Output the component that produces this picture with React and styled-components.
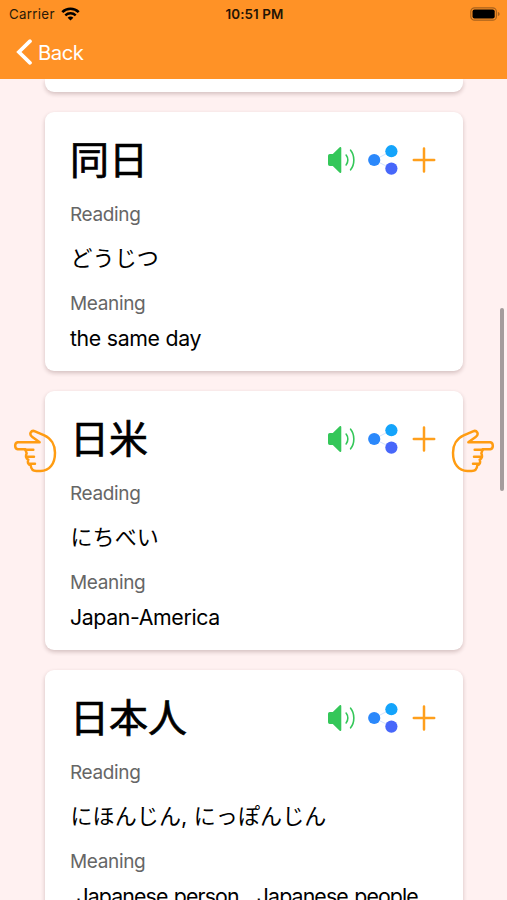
import React from 'react';
import styled, { createGlobalStyle } from 'styled-components';

const GlobalStyle = createGlobalStyle`
  * {
    box-sizing: border-box;
  }

  body {
    margin: 0;
    background-color: #fff1f1;
    font-family: Inter, "Noto Sans CJK JP", sans-serif;
    color: #000;
  }
`;

const Screen = styled.div`
  position: relative;
  display: flex;
  flex-direction: column;
  width: 507px;
  height: 900px;
  overflow: hidden;
  background-color: #fff1f1;
`;

const Header = styled.header`
  flex: none;
  height: 79px;
  background-color: #ff9226;
`;

const StatusBar = styled.div`
  display: grid;
  grid-template-columns: 1fr auto 1fr;
  align-items: center;
  height: 27px;
  padding: 0 7px 0 9px;
`;

const Carrier = styled.div`
  display: flex;
  align-items: center;
  gap: 6px;
  font-size: 13.3px;
  letter-spacing: 0.3px;
  color: #2b1a08;
`;

const Time = styled.div`
  font-size: 13.4px;
  font-weight: 600;
  letter-spacing: 0.1px;
  color: #241405;
`;

const Battery = styled.div`
  display: flex;
  justify-content: flex-end;
`;

const BackButton = styled.button`
  display: flex;
  align-items: center;
  gap: 5px;
  height: 50px;
  padding: 0 0 0 16px;
  border: none;
  background: none;
  font-family: inherit;
  font-size: 20.3px;
  letter-spacing: -0.5px;
  color: #fff;
  cursor: pointer;
`;

const CardList = styled.main`
  flex: 1;
  display: flex;
  flex-direction: column;
  gap: 20px;
  padding: 0 44px 0 45px;
  overflow: hidden;
`;

const Card = styled.section`
  flex: none;
  height: 259px;
  padding: 20px 27px 0 25px;
  border-radius: 9px;
  background-color: #fff;
  box-shadow: 0 2px 4px rgba(60, 20, 20, 0.22);
`;

const PreviousCard = styled(Card)`
  height: 13px;
  padding: 0;
  border-radius: 0 0 9px 9px;
`;

const CardHeader = styled.div`
  display: flex;
  justify-content: space-between;
  align-items: center;
  height: 56px;
`;

const Word = styled.h2`
  margin: 0;
  padding-bottom: 7px;
  font-family: "Noto Sans CJK JP", sans-serif;
  font-size: 39px;
  font-weight: 400;
  line-height: 56px;
  -webkit-text-stroke: 0.7px #000;
`;

const Actions = styled.div`
  display: flex;
  align-items: center;
`;

const ActionButton = styled.button`
  display: flex;
  padding: 0;
  margin-left: ${props => props.$gap || '0'};
  border: none;
  background: none;
  cursor: pointer;
`;

const Label = styled.div`
  height: ${props => props.$height};
  padding-top: ${props => props.$top};
  font-size: 19px;
  line-height: 26px;
  letter-spacing: -0.35px;
  color: #666;
`;

const Reading = styled.div`
  height: 44px;
  padding-left: 0.5px;
  font-size: 22px;
  line-height: 44px;
  letter-spacing: 0.1px;
  white-space: pre;
`;

const Meaning = styled.div`
  font-size: 21.3px;
  line-height: 30px;
  letter-spacing: ${props => (props.$tight ? '-0.87px' : '-0.37px')};
  word-spacing: ${props => (props.$tight ? '1.3px' : '0.3px')};
  white-space: pre;
`;

const Hand = styled.button`
  position: absolute;
  top: 429px;
  left: ${props => props.$left};
  width: 44px;
  height: 44px;
  padding: 0;
  border: none;
  background: none;
  cursor: pointer;
  transform: ${props => (props.$flip ? 'scaleX(-1)' : 'none')};

  svg {
    display: block;
  }
`;

const ScrollThumb = styled.div`
  position: absolute;
  top: 308px;
  right: 3px;
  width: 4px;
  height: 183px;
  border-radius: 2px;
  background-color: #a59c9c;
`;

const words = [
  { id: 1, word: '同日', reading: 'どうじつ', meaning: 'the same day' },
  { id: 2, word: '日米', reading: 'にちべい', meaning: 'Japan-America' },
  { id: 3, word: '日本人', reading: 'にほんじん, にっぽんじん', meaning: ' Japanese person,  Japanese people' },
];

const WifiIcon = () => (
  <svg width="19" height="14" viewBox="0 0 19 14" fill="none" stroke="#000">
    <path d="M1.3 5.1C5.8 .6 13.2 .6 17.7 5.1" strokeWidth="2.6" />
    <path d="M4.3 8.3C7.2 5.5 11.8 5.5 14.7 8.3" strokeWidth="2.4" />
    <path d="M9.5 13.6L6.6 10.7C8.2 9.2 10.8 9.2 12.4 10.7Z" fill="#000" stroke="none" />
  </svg>
);

const BatteryIcon = () => (
  <svg width="30" height="14" viewBox="0 0 30 14">
    <rect x=".8" y=".8" width="25.6" height="12.4" rx="3.8" fill="none" stroke="#a8621d" strokeWidth="1.2" />
    <rect x="2.5" y="2.5" width="22.2" height="9" rx="2" fill="#000" />
    <path d="M27.9 4.9C30.2 5.6 30.2 8.4 27.9 9.1Z" fill="#a8621d" />
  </svg>
);

const BackIcon = () => (
  <svg width="17" height="26" viewBox="0 0 17 26" fill="none" stroke="#fff" strokeWidth="3.7" strokeLinecap="round">
    <path d="M14 2.2L2.9 13L14 23.8" strokeLinejoin="miter" />
  </svg>
);

const SpeakerIcon = () => (
  <svg width="27" height="28" viewBox="0 0 27 28">
    <path
      d="M1.8 7.9H4.8L11.7 1.3C12.3 .8 13.3 1 13.3 1.9V26.1C13.3 27 12.3 27.2 11.7 26.7L4.8 20.1H1.8Q0 20.1 0 18.3V9.7Q0 7.9 1.8 7.9Z"
      fill="#34c759"
    />
    <g fill="none" stroke="#34c759" strokeWidth="1.6" strokeLinecap="round">
      <path d="M18.1 9C20.4 11.8 20.4 16.2 18.1 19" />
      <path d="M22.6 4.2C26.9 9.5 26.9 18.5 22.6 23.8" />
    </g>
  </svg>
);

const ShareIcon = () => (
  <svg width="30" height="30" viewBox="0 0 30 30">
    <path d="M23.4 6.2L6.2 15L23.4 23.6" fill="none" stroke="#d3e5ff" strokeWidth="1" />
    <circle cx="6.2" cy="15" r="6.1" fill="#2b88fb" />
    <circle cx="23.4" cy="6.2" r="6.1" fill="#14a4fb" />
    <circle cx="23.4" cy="23.6" r="6.1" fill="#4767fa" />
  </svg>
);

const PlusIcon = () => (
  <svg width="24" height="26" viewBox="0 0 24 26" stroke="#ff9f1c" strokeWidth="2.5" strokeLinecap="round">
    <path d="M12 1.4V24.6M1.8 13H22.2" />
  </svg>
);

const HandIcon = () => (
  <svg
    width="44"
    height="44"
    viewBox="39 57 132 132"
    fill="none"
    stroke="#ff9c12"
    strokeWidth="7.4"
    strokeLinecap="round"
    strokeLinejoin="round"
  >
    <path d="M53 97H119L97 81C85 72 94 59 105 64L133 76C153 85 165 105 165 128C165 162 148 183 122 183H109C98 183 93 175 92 166C84 164 82 157 85 149C78 146 76 139 80 130L76 118H53C43 116 43 99 53 97Z" />
    <path d="M76 119H100M81 140H102M88 161H105" />
  </svg>
);

const WordCard = ({ item }) => {
  return (
    <Card>
      <CardHeader>
        <Word>{item.word}</Word>
        <Actions>
          <ActionButton><SpeakerIcon /></ActionButton>
          <ActionButton $gap="12.6px"><ShareIcon /></ActionButton>
          <ActionButton $gap="14.4px"><PlusIcon /></ActionButton>
        </Actions>
      </CardHeader>
      <Label $height="48px" $top="14px">Reading</Label>
      <Reading>{item.reading}</Reading>
      <Label $height="43px" $top="11px">Meaning</Label>
      <Meaning $tight={item.meaning.length > 30}>{item.meaning}</Meaning>
    </Card>
  )
}

const App = () => {
  return (
    <>
      <GlobalStyle />
      <Screen>
        <Header>
          <StatusBar>
            <Carrier>Carrier <WifiIcon /></Carrier>
            <Time>10:51 PM</Time>
            <Battery><BatteryIcon /></Battery>
          </StatusBar>
          <BackButton><BackIcon />Back</BackButton>
        </Header>
        <CardList>
          <PreviousCard />
          {words.map(item => <WordCard key={item.id} item={item} />)}
        </CardList>
        <Hand $left="13px"><HandIcon /></Hand>
        <Hand $left="451px" $flip><HandIcon /></Hand>
        <ScrollThumb />
      </Screen>
    </>
  )
}

export default App;
